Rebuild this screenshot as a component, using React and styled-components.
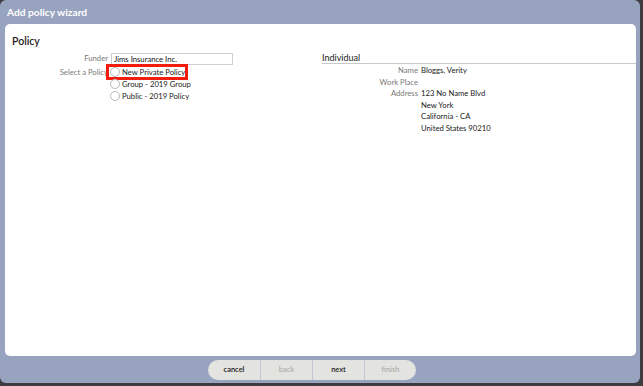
import React from 'react';
import styled, { createGlobalStyle } from 'styled-components';

const Global = createGlobalStyle`
  html, body {
    margin: 0;
    padding: 0;
    background: #3d3d3f;
  }
  body {
    font-family: Lato, "Open Sans", sans-serif;
  }
`;

const Window = styled.div`
  width: 640px;
  height: 383px;
  background: #97a3bf;
  border-radius: 6px;
  display: flex;
  flex-direction: column;
  overflow: hidden;
`;

const TitleBar = styled.div`
  height: 24px;
  line-height: 24px;
  padding-left: 7px;
  color: #ffffff;
  font-size: 10.2px;
  font-weight: 700;
`;

const Panel = styled.div`
  flex: 1;
  margin: 0 4px 0 5px;
  background: #ffffff;
  border-radius: 5px;
  padding: 10px 0 0 7px;
  color: #222;
`;

const Heading = styled.div`
  font-size: 10.5px;
  font-weight: 600;
  height: 14px;
  line-height: 14px;
  margin-bottom: 4px;
`;

const Columns = styled.div`
  display: grid;
  grid-template-columns: 310px 1fr;
  align-items: start;
`;

const FieldGrid = styled.div`
  display: grid;
  grid-template-columns: 96px 1fr;
  align-content: start;
  column-gap: 3px;
  font-size: 7.7px;
  line-height: ${(p) => p.$row || 12}px;
`;

const Label = styled.div`
  text-align: right;
  color: #7a7a7a;
  white-space: nowrap;
`;

const Value = styled.div`
  color: #222;
`;

const TextInput = styled.div`
  width: 118px;
  height: 10px;
  line-height: 10px;
  border: 1px solid #cfcfcf;
  padding-left: 2px;
  margin: 1px 0;
  color: #111;
`;

const RadioList = styled.div`
  display: flex;
  flex-direction: column;
`;

const RadioRow = styled.div`
  position: relative;
  display: flex;
  align-items: center;
  gap: 2px;
  height: 12px;
  margin-left: -1px;
`;

const Circle = styled.span`
  width: 8px;
  height: 8px;
  border-radius: 50%;
  border: 1px solid #b9b9b9;
  background: #fff;
`;

const Highlight = styled.span`
  position: absolute;
  left: -4px;
  top: -2px;
  width: 76px;
  height: 8px;
  border: 3px solid #f21d0c;
  padding: 1px 0;
  pointer-events: none;
`;

const SectionTitle = styled.div`
  font-size: 9px;
  height: 11px;
  line-height: 11px;
  border-bottom: 1px solid #c9c9c9;
  margin-bottom: 1px;
`;

const Footer = styled.div`
  height: 27px;
  display: flex;
  align-items: center;
  justify-content: center;
  padding-right: 16px;
`;

const ButtonGroup = styled.div`
  display: flex;
  height: 20px;
  border-radius: 10px;
  overflow: hidden;
  background: #e3e3df;
`;

const Button = styled.div`
  box-sizing: border-box;
  width: 52px;
  display: flex;
  align-items: center;
  justify-content: center;
  font-size: 7.5px;
  font-weight: 600;
  color: ${(p) => (p.$disabled ? '#b0b0ad' : '#222')};
  & + & {
    border-left: 1px solid #c0c6d6;
  }
`;

const policies = ['New Private Policy', 'Group - 2019 Group', 'Public - 2019 Policy'];

export default function App() {
  return (
    <>
      <Global />
      <Window>
        <TitleBar>Add policy wizard</TitleBar>
        <Panel>
          <Heading>Policy</Heading>
          <Columns>
            <FieldGrid>
              <Label>Funder</Label>
              <TextInput>Jims Insurance Inc.</TextInput>
              <Label>Select a Policy</Label>
              <RadioList>
                {policies.map((p, i) => (
                  <RadioRow key={p}>
                    <Circle />
                    <span>{p}</span>
                    {i === 0 && <Highlight />}
                  </RadioRow>
                ))}
              </RadioList>
            </FieldGrid>
            <div>
              <SectionTitle>Individual</SectionTitle>
              <FieldGrid $row={11.5}>
                <Label>Name</Label>
                <Value>Bloggs, Verity</Value>
                <Label>Work Place</Label>
                <Value />
                <Label>Address</Label>
                <Value>
                  123 No Name Blvd
                  <br />
                  New York
                  <br />
                  California - CA
                  <br />
                  United States 90210
                </Value>
              </FieldGrid>
            </div>
          </Columns>
        </Panel>
        <Footer>
          <ButtonGroup>
            <Button>cancel</Button>
            <Button $disabled>back</Button>
            <Button>next</Button>
            <Button $disabled>finish</Button>
          </ButtonGroup>
        </Footer>
      </Window>
    </>
  );
}
